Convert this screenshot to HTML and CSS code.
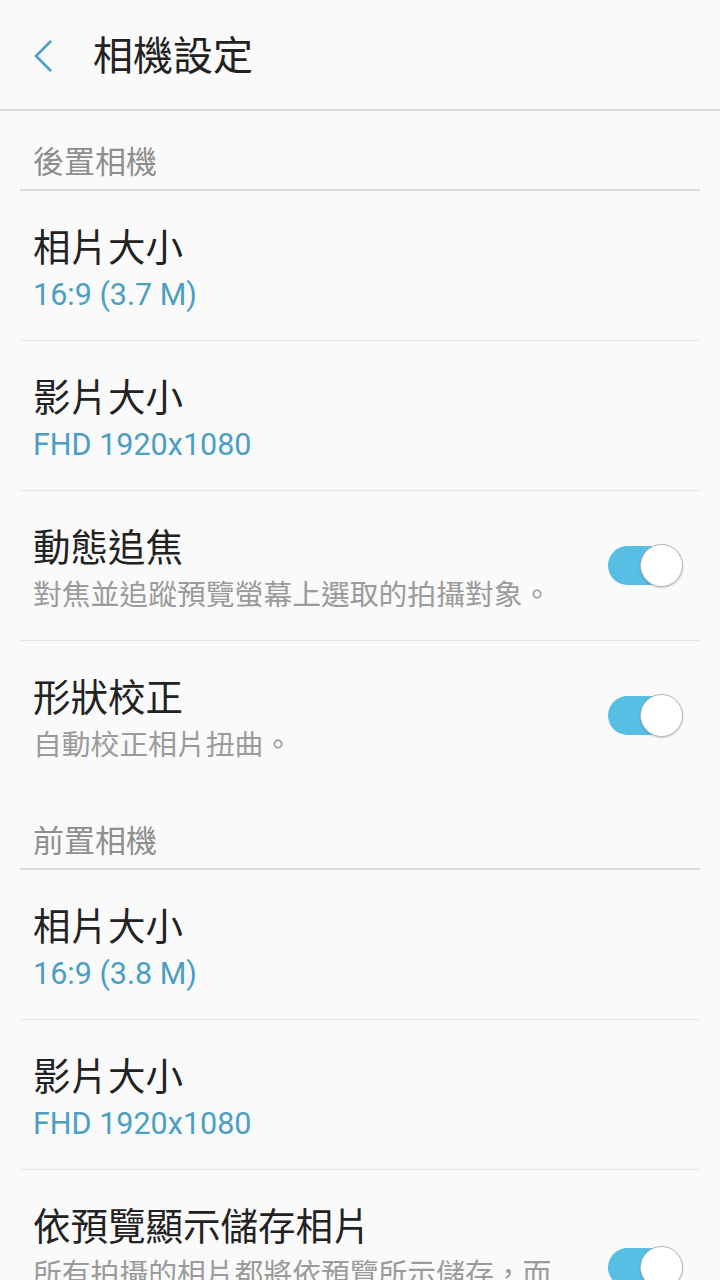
FILE: index.html
```html
<!DOCTYPE html>
<html lang="zh-Hant">
<head>
    <meta charset="UTF-8">
    <meta name="viewport" content="width=device-width, initial-scale=1.0">
    <title>相機設定</title>
    <link rel="stylesheet" href="styles.css">
</head>
<body>

<div class="app-bar">
    <svg class="back" width="20" height="36" viewBox="0 0 20 36">
        <polyline points="18,3 3,18 18,33" fill="none" stroke="#4aa2c4" stroke-width="2.6"/>
    </svg>
    <h1 class="app-title">相機設定</h1>
</div>

<div class="list">
    <div class="section">後置相機</div>

    <div class="item">
        <div class="item-text">
            <div class="item-title">相片大小</div>
            <div class="item-value">16:9 (3.7 M)</div>
        </div>
    </div>

    <div class="item">
        <div class="item-text">
            <div class="item-title">影片大小</div>
            <div class="item-value">FHD 1920x1080</div>
        </div>
    </div>

    <div class="item">
        <div class="item-text">
            <div class="item-title">動態追焦</div>
            <div class="item-desc">對焦並追蹤預覽螢幕上選取的拍攝對象。</div>
        </div>
        <div class="switch"></div>
    </div>

    <div class="item no-line">
        <div class="item-text">
            <div class="item-title">形狀校正</div>
            <div class="item-desc">自動校正相片扭曲。</div>
        </div>
        <div class="switch"></div>
    </div>

    <div class="section">前置相機</div>

    <div class="item">
        <div class="item-text">
            <div class="item-title">相片大小</div>
            <div class="item-value">16:9 (3.8 M)</div>
        </div>
    </div>

    <div class="item">
        <div class="item-text">
            <div class="item-title">影片大小</div>
            <div class="item-value">FHD 1920x1080</div>
        </div>
    </div>

    <div class="item">
        <div class="item-text">
            <div class="item-title">依預覽顯示儲存相片</div>
            <div class="item-desc">所有拍攝的相片都將依預覽所示儲存，而非翻轉。</div>
        </div>
        <div class="switch"></div>
    </div>
</div>

</body>
</html>
```

FILE: styles.css
```css
html {
    background-color: #fafafa;
}

body {
    margin: 0;
    background-color: #fafafa;
    font-family: Roboto, "Noto Sans CJK TC", sans-serif;
    color: #222;
}

.app-bar {
    height: 109px;
    display: flex;
    align-items: center;
    padding-left: 33px;
    border-bottom: 2px solid #d8d8d8;
}

.back {
    display: block;
    margin-top: 2px;
}

.app-title {
    margin: 4px 0 0 40px;
    font-size: 40px;
    font-weight: normal;
    color: #222;
    line-height: 48px;
}

.list {
    padding: 0 20px;
}

.section {
    padding: 33px 0 7px 13px;
    font-size: 31px;
    line-height: 38px;
    color: #8e8e8e;
    border-bottom: 2px solid #dcdcdc;
}

.item {
    display: flex;
    align-items: center;
    padding: 33px 28px 22px 13px;
    border-bottom: 1px solid #e6e6e6;
}

.item.no-line {
    border-bottom: none;
}

.item-text {
    flex: 1;
    margin-right: 40px;
}

.item-title {
    font-size: 37.5px;
    line-height: 48px;
    color: #222;
}

.item-value {
    font-size: 30.5px;
    line-height: 46px;
    color: #4a9fc3;
}

.item-desc {
    font-size: 28.8px;
    line-height: 46px;
    color: #9b9b9b;
}

.switch {
    position: relative;
    width: 64px;
    height: 39px;
    margin-bottom: 12px;
    border-radius: 20px;
    background-color: #56bfe3;
    flex-shrink: 0;
}

.switch::after {
    content: "";
    position: absolute;
    right: -11px;
    top: -2px;
    width: 41px;
    height: 41px;
    border-radius: 50%;
    background-color: #fff;
    border: 1px solid #b5b5b5;
    box-shadow: 0 1px 2px rgba(0, 0, 0, 0.2);
}
```
